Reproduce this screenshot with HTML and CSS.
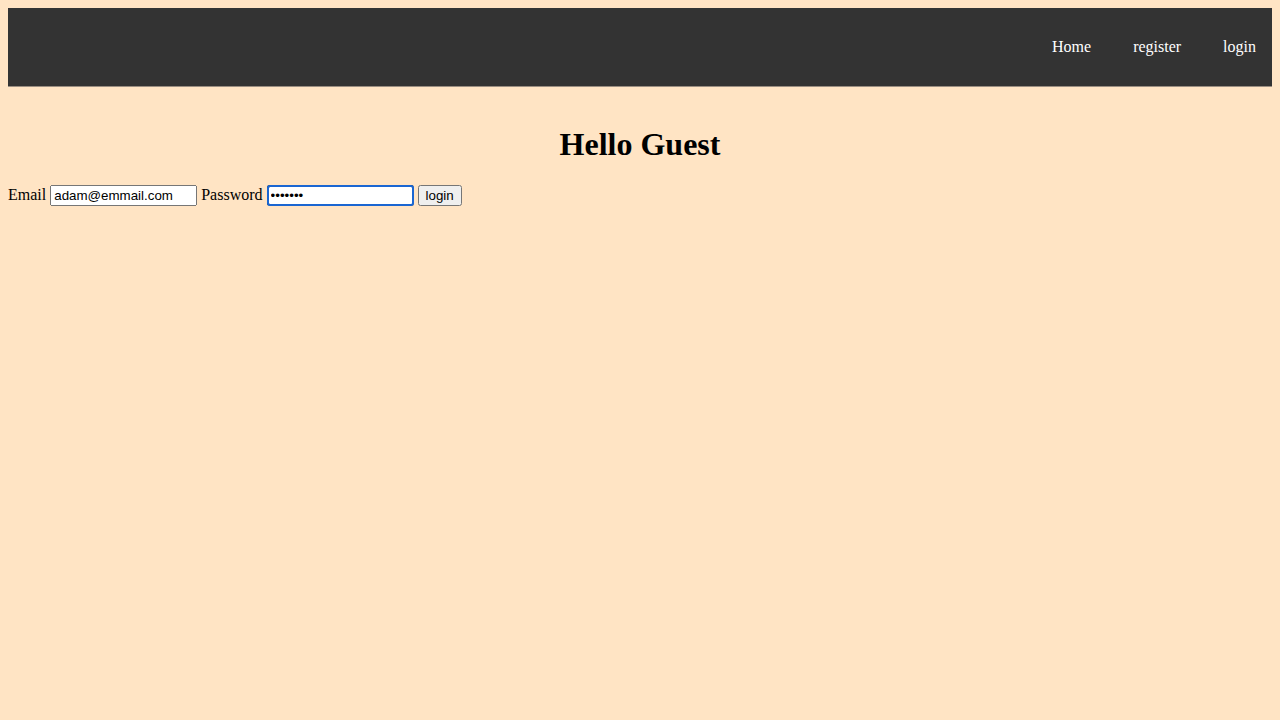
FILE: index.html
```html
<!DOCTYPE html>
<html>
<head>
<meta charset="utf-8">
<title>Hello Guest</title>
<link rel="stylesheet" href="styles.css">
</head>
<body>
<nav class="topnav">
  <ul class="menu">
    <li><a href="#">Home</a></li>
    <li><a href="#">register</a></li>
    <li><a href="#">login</a></li>
  </ul>
</nav>
<h1 class="greeting">Hello Guest</h1>
<form class="login-form">
  <label>Email</label> <input class="field" type="email" value="adam@emmail.com"> <label>Password</label> <input class="field focused" type="password" value="1234567"> <button type="button">login</button>
</form>
</body>
</html>
```
FILE: styles.css
```css
html {
  background: #ffe4c4;
}
body {
  margin: 8px;
  background: #ffe4c4;
  font-family: "Liberation Serif", "Times New Roman", serif;
  font-size: 16px;
}
.topnav {
  background: #333333;
  border-bottom: 1px solid #9a8e82;
  height: 78px;
  box-sizing: content-box;
  margin-bottom: 39px;
}
.menu {
  list-style: none;
  margin: 0;
  padding: 16px 0;
  display: flex;
  justify-content: flex-end;
  gap: 10px;
}
.menu a {
  display: block;
  padding: 14px 16px;
  color: #ffffff;
  text-decoration: none;
}
.greeting {
  text-align: center;
  font-size: 32px;
  margin: 21px 0 22px;
}
.login-form {
  margin: 0;
}
.field {
  width: 139px;
}
.focused {
  outline: 2px solid #1a66d2;
  outline-offset: -2px;
  border-radius: 3px;
}
```
